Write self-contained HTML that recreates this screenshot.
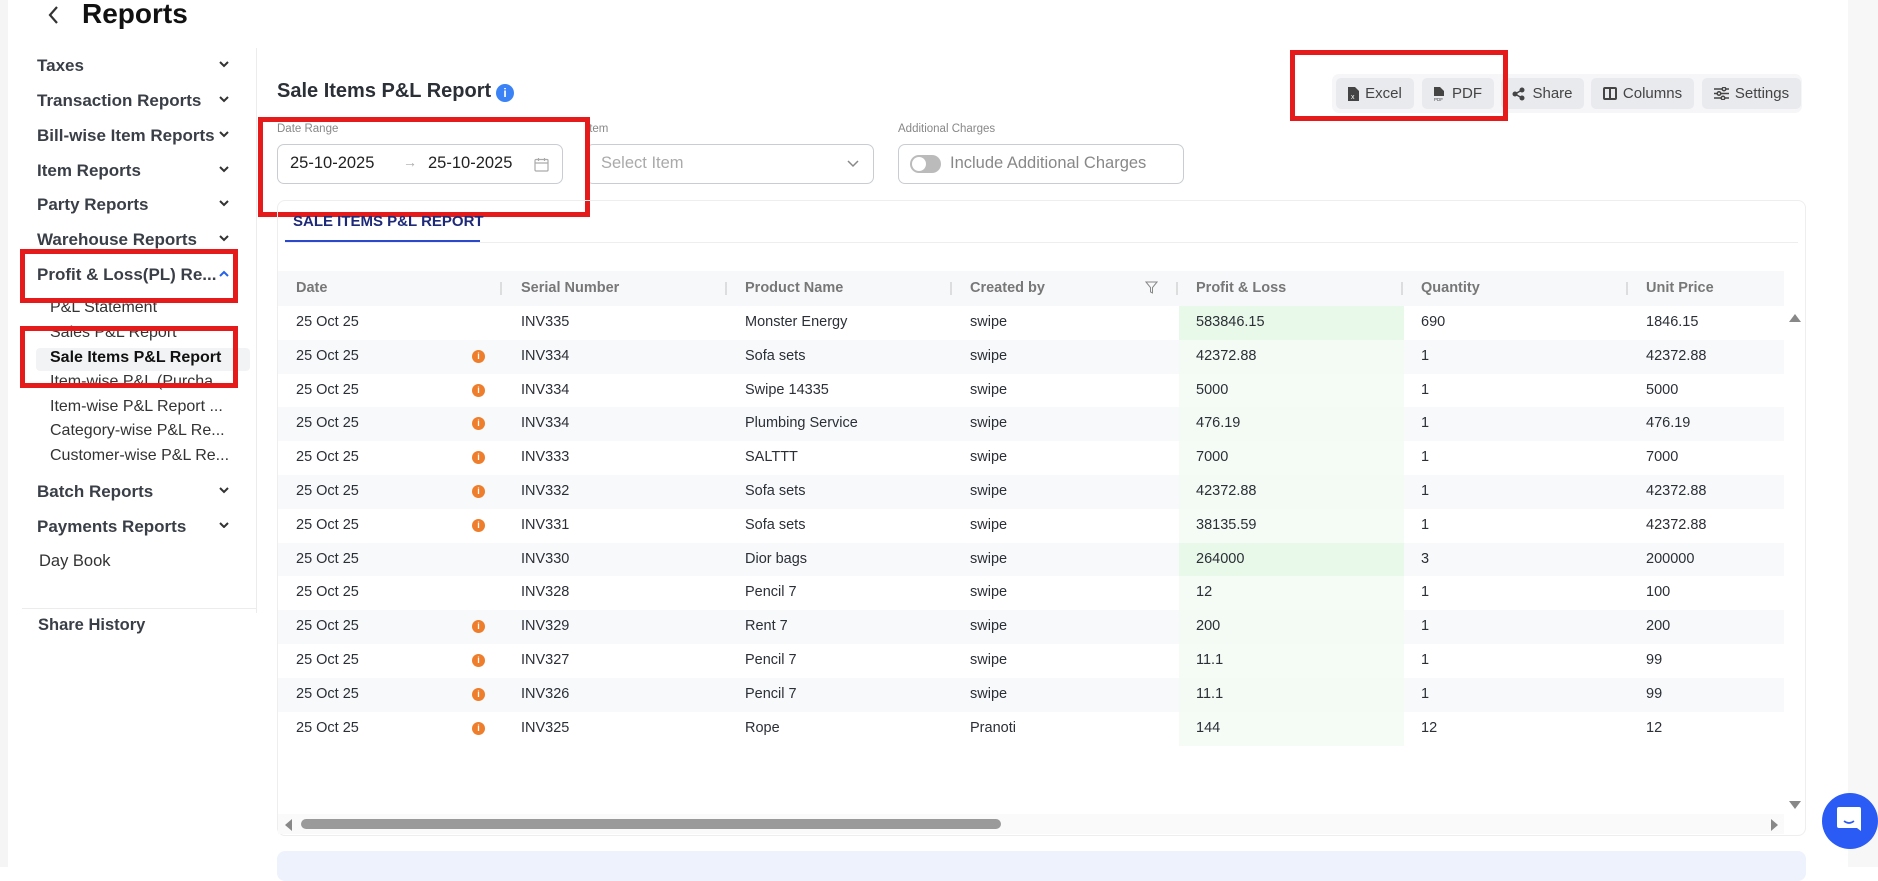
<!DOCTYPE html>
<html><head><meta charset="utf-8"><style>
*{box-sizing:border-box;margin:0;padding:0}
body{width:1878px;height:867px;overflow:hidden;background:#fff;font-family:"Liberation Sans",Arial,sans-serif;color:#222;position:relative}
.a{position:absolute}
.nav{position:absolute;left:37px;font-size:17px;font-weight:bold;color:#3a3f47;width:200px}
.nav .ch{position:absolute;left:180px;top:0}
.sub{position:absolute;left:50px;font-size:16px;color:#333;white-space:nowrap}
.btn{position:absolute;top:78px;height:31px;background:#e9eaee;border-radius:5px;font-size:15px;color:#444;display:flex;align-items:center;justify-content:center;gap:6px}
.lbl{position:absolute;top:123px;font-size:11.5px;color:#888}
.inp{position:absolute;top:144px;height:40px;border:1px solid #c9ccd1;border-radius:7px;font-size:16.5px}
.th{position:absolute;top:271px;height:35px;line-height:35px;font-size:14.5px;color:#777;font-weight:bold}
.sep{position:absolute;top:282px;width:2px;height:13px;background:#ddd}
.row{position:absolute;left:278px;width:1506px;height:33.8px}
.c{position:absolute;font-size:14.5px;color:#2b2f36;line-height:33.8px;top:0}
.ii{position:absolute;left:472px;top:10px;width:13px;height:13px;border-radius:50%;background:#ee7d2c;color:#fff;font-size:9px;font-weight:bold;text-align:center;line-height:13px}
.red{position:absolute;border:5px solid #e51b1b}
</style></head><body>
<div class="a" style="left:0;top:0;width:8px;height:867px;background:#f5f5f6"></div>
<div class="a" style="left:1848px;top:0;width:30px;height:867px;background:#f7f7f8"></div>
<svg class="a" style="left:46px;top:4px" width="16" height="22" viewBox="0 0 16 22"><path d="M11 3L4 11l7 8" stroke="#333" stroke-width="2.2" fill="none"/></svg>
<div class="a" style="left:82px;top:-2px;font-size:28px;font-weight:bold;color:#111">Reports</div>
<div class="a" style="left:256px;top:48px;width:1px;height:565px;background:#ececec"></div>
<div class="a" style="left:22px;top:608px;width:234px;height:1px;background:#ececec"></div>

<div class="nav" style="top:56px">Taxes</div>
<div class="nav" style="top:91px">Transaction Reports</div>
<div class="nav" style="top:126px">Bill-wise Item Reports</div>
<div class="nav" style="top:161px">Item Reports</div>
<div class="nav" style="top:195px">Party Reports</div>
<div class="nav" style="top:230px">Warehouse Reports</div>
<div class="nav" style="top:265px">Profit &amp; Loss(PL) Re...</div>
<div class="nav" style="top:482px">Batch Reports</div>
<div class="nav" style="top:517px">Payments Reports</div>
<div class="a" style="left:39px;top:552px;font-size:16.5px;color:#333">Day Book</div>
<div class="a" style="left:38px;top:616px;font-size:16.5px;font-weight:bold;color:#3a3f47">Share History</div>
<svg class="a" style="left:217px;top:58px" width="14" height="470" viewBox="0 0 14 470">
<g stroke="#333" stroke-width="2" fill="none">
<path d="M3 4l4 4 4-4"/><path d="M3 39l4 4 4-4"/><path d="M3 74l4 4 4-4"/><path d="M3 109l4 4 4-4"/><path d="M3 143l4 4 4-4"/><path d="M3 178l4 4 4-4"/>
<path d="M3 218l4-4 4 4" stroke="#2563eb"/>
<path d="M3 430l4 4 4-4"/><path d="M3 465l4 4 4-4"/></g></svg>
<div class="a" style="left:36px;top:348px;width:214px;height:23px;background:#f2f3f5;border-radius:4px"></div>
<div class="sub" style="top:299px">P&amp;L Statement</div>
<div class="sub" style="top:324px">Sales P&amp;L Report</div>
<div class="sub" style="top:349px;font-weight:bold;color:#111">Sale Items P&amp;L Report</div>
<div class="sub" style="top:373px">Item-wise P&amp;L (Purcha...</div>
<div class="sub" style="top:398px">Item-wise P&amp;L Report ...</div>
<div class="sub" style="top:422px">Category-wise P&amp;L Re...</div>
<div class="sub" style="top:447px">Customer-wise P&amp;L Re...</div>

<div class="a" style="left:277px;top:80px;font-size:20px;font-weight:bold;color:#2b2f36">Sale Items P&amp;L Report</div>
<div class="a" style="left:496px;top:84px;width:18px;height:18px;border-radius:50%;background:#3b82f6;color:#fff;font-size:12px;font-weight:bold;text-align:center;line-height:18px">i</div>

<div class="a" style="left:1332px;top:74px;width:470px;height:39px;background:#f6f6f8;border-radius:7px"></div>
<div class="btn" style="left:1336px;width:78px"><svg width="11" height="14" viewBox="0 0 11 14"><path d="M0 0h7l4 4v10H0z" fill="#444"/><text x="3" y="12" font-size="7" fill="#fff" font-family="Liberation Sans">x</text></svg>Excel</div>
<div class="btn" style="left:1422px;width:72px"><svg width="12" height="14" viewBox="0 0 12 14"><path d="M0 0h6l4 4v5H0z" fill="#444"/><text x="0" y="14" font-size="4.5" fill="#444" font-family="Liberation Sans">PDF</text></svg>PDF</div>
<div class="btn" style="left:1501px;width:83px;background:#e9eaee"><svg width="14" height="14" viewBox="0 0 14 14"><circle cx="10" cy="3" r="2.5" fill="#444"/><circle cx="10" cy="11" r="2.5" fill="#444"/><circle cx="3" cy="7" r="2.5" fill="#444"/><path d="M3 7L10 3M3 7l7 4" stroke="#444" stroke-width="1.5"/></svg>Share</div>
<div class="btn" style="left:1591px;width:103px"><svg width="14" height="13" viewBox="0 0 14 13"><rect x="1" y="1" width="12" height="11" rx="1" fill="none" stroke="#444" stroke-width="2"/><path d="M7 1v11" stroke="#444" stroke-width="2"/></svg>Columns</div>
<div class="btn" style="left:1702px;width:99px"><svg width="15" height="13" viewBox="0 0 15 13"><g stroke="#444" stroke-width="1.5" fill="none"><path d="M0 2h15M0 6.5h15M0 11h15"/><circle cx="10" cy="2" r="1.8" fill="#e9eaee"/><circle cx="5" cy="6.5" r="1.8" fill="#e9eaee"/><circle cx="9" cy="11" r="1.8" fill="#e9eaee"/></g></svg>Settings</div>

<div class="lbl" style="left:277px">Date Range</div>
<div class="inp" style="left:277px;width:286px"><span class="a" style="left:12px;top:9px">25-10-2025</span><span class="a" style="left:125px;top:9px;color:#aaa;font-size:14px">→</span><span class="a" style="left:150px;top:9px">25-10-2025</span>
<svg class="a" style="left:256px;top:12px" width="15" height="15" viewBox="0 0 15 15"><rect x="1" y="2.5" width="13" height="11.5" rx="1" fill="none" stroke="#aaa" stroke-width="1.2"/><path d="M1 6h13M4.5 1v3M10.5 1v3" stroke="#aaa" stroke-width="1.2"/></svg></div>
<div class="lbl" style="left:586px">Item</div>
<div class="inp" style="left:586px;width:288px"><span class="a" style="left:14px;top:9px;color:#aaa">Select Item</span><svg class="a" style="left:260px;top:15px" width="12" height="8" viewBox="0 0 12 8"><path d="M1 1l5 5 5-5" stroke="#888" stroke-width="1.5" fill="none"/></svg></div>
<div class="lbl" style="left:898px">Additional Charges</div>
<div class="inp" style="left:898px;width:286px"><div class="a" style="left:11px;top:10px;width:31px;height:18px;border-radius:9px;background:#bbb"><div class="a" style="left:2px;top:2px;width:14px;height:14px;border-radius:50%;background:#fff"></div></div><span class="a" style="left:51px;top:9px;color:#888">Include Additional Charges</span></div>

<div class="red" style="left:1290px;top:50px;width:218px;height:71px"></div>
<div class="red" style="left:258px;top:117px;width:332px;height:100px"></div>
<div class="red" style="left:20px;top:249px;width:218px;height:54px"></div>
<div class="red" style="left:20px;top:326px;width:218px;height:62px"></div>

<div class="a" style="left:277px;top:200px;width:1529px;height:636px;border:1px solid #eee;border-radius:8px"></div>
<div class="a" style="left:293px;top:213px;font-size:15px;font-weight:bold;color:#1e2a78">SALE ITEMS P&amp;L REPORT</div>
<div class="a" style="left:285px;top:240px;width:195px;height:2px;background:#2b4acb"></div>
<div class="a" style="left:285px;top:242px;width:1513px;height:1px;background:#eee"></div>

<div class="a" style="left:278px;top:271px;width:1506px;height:35px;background:#f7f8fa"></div>
<div class="th" style="left:296px">Date</div><div class="sep" style="left:500px"></div>
<div class="th" style="left:521px">Serial Number</div><div class="sep" style="left:725px"></div>
<div class="th" style="left:745px">Product Name</div><div class="sep" style="left:950px"></div>
<div class="th" style="left:970px">Created by</div>
<svg class="a" style="left:1145px;top:281px" width="13" height="13" viewBox="0 0 13 13"><path d="M1 1h11L7.5 6.5V12L5.5 11V6.5z" stroke="#888" fill="none"/></svg>
<div class="sep" style="left:1176px"></div>
<div class="th" style="left:1196px">Profit &amp; Loss</div><div class="sep" style="left:1401px"></div>
<div class="th" style="left:1421px">Quantity</div><div class="sep" style="left:1626px"></div>
<div class="th" style="left:1646px">Unit Price</div>

<div id="rows"></div>
<div class="row" style="top:306px"><div class="a" style="left:901px;width:225px;height:34px;background:#e8f9ea"></div><div class="c" style="left:18px">25 Oct 25</div><div class="c" style="left:243px">INV335</div><div class="c" style="left:467px">Monster Energy</div><div class="c" style="left:692px">swipe</div><div class="c" style="left:918px">583846.15</div><div class="c" style="left:1143px">690</div><div class="c" style="left:1368px">1846.15</div></div>
<div class="row" style="top:339.8px;background:#f8f9fa"><div class="a" style="left:901px;width:225px;height:34px;background:#f3fbf4"></div><div class="ii" style="left:194px">i</div><div class="c" style="left:18px">25 Oct 25</div><div class="c" style="left:243px">INV334</div><div class="c" style="left:467px">Sofa sets</div><div class="c" style="left:692px">swipe</div><div class="c" style="left:918px">42372.88</div><div class="c" style="left:1143px">1</div><div class="c" style="left:1368px">42372.88</div></div>
<div class="row" style="top:373.6px"><div class="a" style="left:901px;width:225px;height:34px;background:#f5fcf6"></div><div class="ii" style="left:194px">i</div><div class="c" style="left:18px">25 Oct 25</div><div class="c" style="left:243px">INV334</div><div class="c" style="left:467px">Swipe 14335</div><div class="c" style="left:692px">swipe</div><div class="c" style="left:918px">5000</div><div class="c" style="left:1143px">1</div><div class="c" style="left:1368px">5000</div></div>
<div class="row" style="top:407.4px;background:#f8f9fa"><div class="a" style="left:901px;width:225px;height:34px;background:#f3fbf4"></div><div class="ii" style="left:194px">i</div><div class="c" style="left:18px">25 Oct 25</div><div class="c" style="left:243px">INV334</div><div class="c" style="left:467px">Plumbing Service</div><div class="c" style="left:692px">swipe</div><div class="c" style="left:918px">476.19</div><div class="c" style="left:1143px">1</div><div class="c" style="left:1368px">476.19</div></div>
<div class="row" style="top:441.2px"><div class="a" style="left:901px;width:225px;height:34px;background:#f5fcf6"></div><div class="ii" style="left:194px">i</div><div class="c" style="left:18px">25 Oct 25</div><div class="c" style="left:243px">INV333</div><div class="c" style="left:467px">SALTTT</div><div class="c" style="left:692px">swipe</div><div class="c" style="left:918px">7000</div><div class="c" style="left:1143px">1</div><div class="c" style="left:1368px">7000</div></div>
<div class="row" style="top:475px;background:#f8f9fa"><div class="a" style="left:901px;width:225px;height:34px;background:#f3fbf4"></div><div class="ii" style="left:194px">i</div><div class="c" style="left:18px">25 Oct 25</div><div class="c" style="left:243px">INV332</div><div class="c" style="left:467px">Sofa sets</div><div class="c" style="left:692px">swipe</div><div class="c" style="left:918px">42372.88</div><div class="c" style="left:1143px">1</div><div class="c" style="left:1368px">42372.88</div></div>
<div class="row" style="top:508.8px"><div class="a" style="left:901px;width:225px;height:34px;background:#f5fcf6"></div><div class="ii" style="left:194px">i</div><div class="c" style="left:18px">25 Oct 25</div><div class="c" style="left:243px">INV331</div><div class="c" style="left:467px">Sofa sets</div><div class="c" style="left:692px">swipe</div><div class="c" style="left:918px">38135.59</div><div class="c" style="left:1143px">1</div><div class="c" style="left:1368px">42372.88</div></div>
<div class="row" style="top:542.6px;background:#f8f9fa"><div class="a" style="left:901px;width:225px;height:34px;background:#e8f9ea"></div><div class="c" style="left:18px">25 Oct 25</div><div class="c" style="left:243px">INV330</div><div class="c" style="left:467px">Dior bags</div><div class="c" style="left:692px">swipe</div><div class="c" style="left:918px">264000</div><div class="c" style="left:1143px">3</div><div class="c" style="left:1368px">200000</div></div>
<div class="row" style="top:576.4px"><div class="a" style="left:901px;width:225px;height:34px;background:#f5fcf6"></div><div class="c" style="left:18px">25 Oct 25</div><div class="c" style="left:243px">INV328</div><div class="c" style="left:467px">Pencil 7</div><div class="c" style="left:692px">swipe</div><div class="c" style="left:918px">12</div><div class="c" style="left:1143px">1</div><div class="c" style="left:1368px">100</div></div>
<div class="row" style="top:610.2px;background:#f8f9fa"><div class="a" style="left:901px;width:225px;height:34px;background:#f3fbf4"></div><div class="ii" style="left:194px">i</div><div class="c" style="left:18px">25 Oct 25</div><div class="c" style="left:243px">INV329</div><div class="c" style="left:467px">Rent 7</div><div class="c" style="left:692px">swipe</div><div class="c" style="left:918px">200</div><div class="c" style="left:1143px">1</div><div class="c" style="left:1368px">200</div></div>
<div class="row" style="top:644px"><div class="a" style="left:901px;width:225px;height:34px;background:#f5fcf6"></div><div class="ii" style="left:194px">i</div><div class="c" style="left:18px">25 Oct 25</div><div class="c" style="left:243px">INV327</div><div class="c" style="left:467px">Pencil 7</div><div class="c" style="left:692px">swipe</div><div class="c" style="left:918px">11.1</div><div class="c" style="left:1143px">1</div><div class="c" style="left:1368px">99</div></div>
<div class="row" style="top:677.8px;background:#f8f9fa"><div class="a" style="left:901px;width:225px;height:34px;background:#f3fbf4"></div><div class="ii" style="left:194px">i</div><div class="c" style="left:18px">25 Oct 25</div><div class="c" style="left:243px">INV326</div><div class="c" style="left:467px">Pencil 7</div><div class="c" style="left:692px">swipe</div><div class="c" style="left:918px">11.1</div><div class="c" style="left:1143px">1</div><div class="c" style="left:1368px">99</div></div>
<div class="row" style="top:711.6px"><div class="a" style="left:901px;width:225px;height:34px;background:#f5fcf6"></div><div class="ii" style="left:194px">i</div><div class="c" style="left:18px">25 Oct 25</div><div class="c" style="left:243px">INV325</div><div class="c" style="left:467px">Rope</div><div class="c" style="left:692px">Pranoti</div><div class="c" style="left:918px">144</div><div class="c" style="left:1143px">12</div><div class="c" style="left:1368px">12</div></div>

<svg class="a" style="left:1788px;top:312px" width="14" height="12"><path d="M1 10L7 2l6 8z" fill="#888"/></svg>
<svg class="a" style="left:1788px;top:799px" width="14" height="12"><path d="M1 2l6 8 6-8z" fill="#888"/></svg>
<div class="a" style="left:278px;top:814px;width:1506px;height:20px;background:#fafafa"></div>
<svg class="a" style="left:283px;top:818px" width="10" height="14"><path d="M9 1L2 7l7 6z" fill="#888"/></svg>
<svg class="a" style="left:1770px;top:818px" width="10" height="14"><path d="M1 1l7 6-7 6z" fill="#888"/></svg>
<div class="a" style="left:301px;top:819px;width:700px;height:10px;border-radius:5px;background:#9a9a9a"></div>

<div class="a" style="left:277px;top:851px;width:1529px;height:30px;background:#eef2fd;border-radius:8px"></div>
<div class="a" style="left:1822px;top:793px;width:56px;height:56px;border-radius:50%;background:#2b5bf5"></div>
<svg class="a" style="left:1836px;top:805px" width="26" height="32" viewBox="0 0 26 32"><path d="M3 2h20a2 2 0 0 1 2 2v22l-4-3H3a2 2 0 0 1-2-2V4a2 2 0 0 1 2-2z" fill="#fff"/><path d="M8 16q5 4 10 0" stroke="#2b5bf5" stroke-width="1.6" fill="none"/></svg>
</body></html>
